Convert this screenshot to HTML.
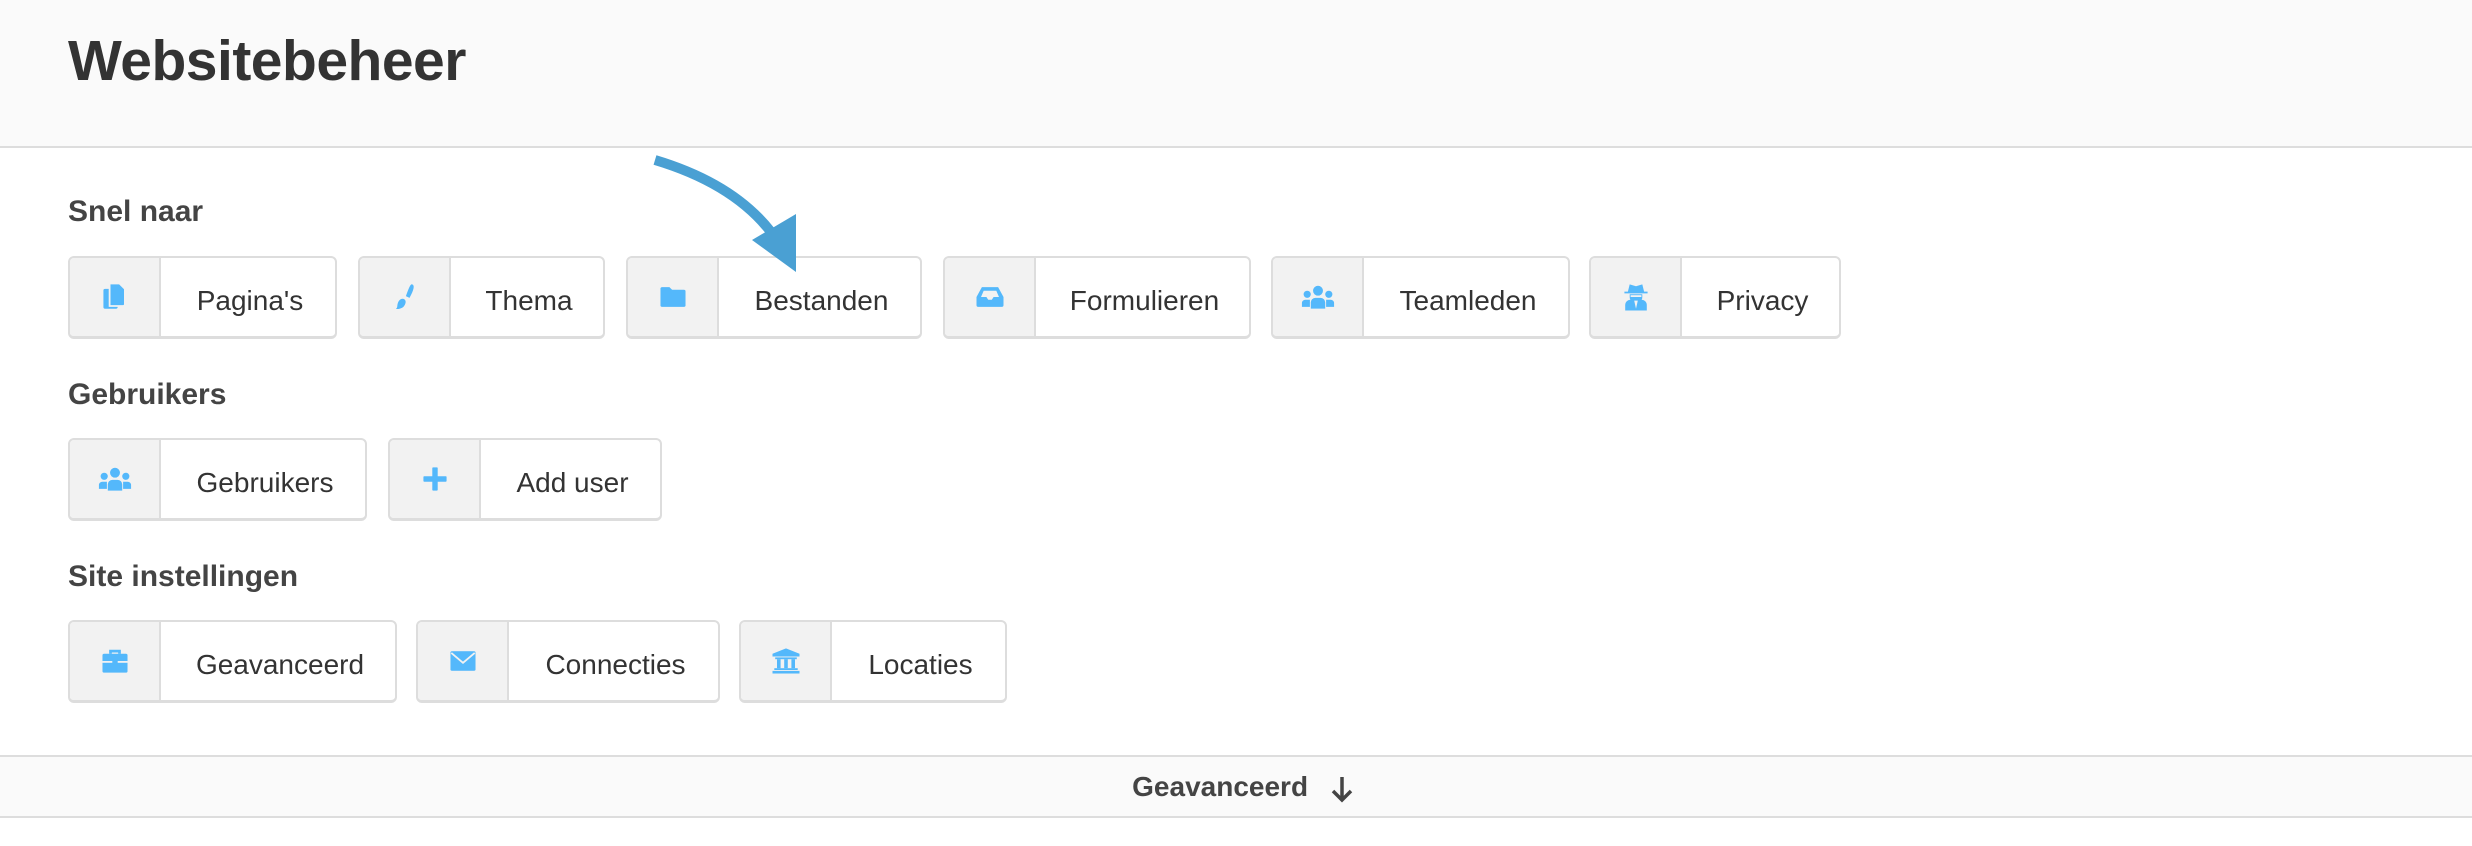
<!DOCTYPE html>
<html><head><meta charset="utf-8"><style>
*{margin:0;padding:0;box-sizing:border-box}
body{width:2472px;height:846px;background:#fff;font-family:"Liberation Sans",Arial,sans-serif;position:relative;overflow:hidden;color:#333}
.hdr{position:absolute;left:0;top:0;width:2472px;height:148px;background:#fafafa;border-bottom:2px solid #ddd}
h1{position:absolute;left:68px;top:28px;font-size:57px;font-weight:bold;color:#333;letter-spacing:-0.5px}
h2{position:absolute;left:68px;font-size:30px;font-weight:bold;color:#444}
.btn{position:absolute;height:83px;border:2px solid #ddd;border-bottom-width:3px;border-radius:6px;background:#fff;display:flex;overflow:hidden}
.ic{width:91px;background:#f2f2f2;border-right:2px solid #ddd;display:flex;align-items:center;justify-content:center;flex:none}
.ic svg{transform:scale(0.9)}
.lb{flex:1;display:flex;align-items:center;justify-content:center;font-size:28px;color:#333;padding-top:7px;padding-left:4px}
.bar{position:absolute;left:0;top:755px;width:2472px;height:63px;background:#fafafa;border-top:2px solid #ddd;border-bottom:2px solid #ddd;text-align:center;font-weight:bold;font-size:28px;color:#444;line-height:59px;padding-left:14px}
svg{display:block}
</style></head><body>
<div class="hdr"><h1>Websitebeheer</h1></div>
<h2 style="top:195px">Snel naar</h2>
<h2 style="top:378px">Gebruikers</h2>
<h2 style="top:560px">Site instellingen</h2>

<div class="btn" style="left:68px;top:256px;width:269px"><div class="ic"><svg width="26" height="30" viewBox="0 0 26 30"><rect x="0" y="6" width="16" height="22" rx="2" fill="#54b8fb"/><path d="M7 0h11l6 6v17a2 2 0 0 1-2 2H7z" fill="#54b8fb" stroke="#f2f2f2" stroke-width="2"/></svg></div><div class="lb">Pagina's</div></div>
<div class="btn" style="left:358px;top:256px;width:247px"><div class="ic"><svg width="24" height="30" viewBox="0 0 24 30"><path d="M20 1c3 1 2 6 -3 15l-4-2C16 6 18 0 20 1z" fill="#54b8fb"/><path d="M9 17c4 0 5 4 2 8c-2 3-8 4-9 3c2-1 1-3 2-6c1-3 3-5 5-5z" fill="#54b8fb"/></svg></div><div class="lb">Thema</div></div>
<div class="btn" style="left:626px;top:256px;width:296px"><div class="ic"><svg width="28" height="24" viewBox="0 0 28 24"><path d="M0 3a2 2 0 0 1 2-2h8l3 3h13a2 2 0 0 1 2 2v15a2 2 0 0 1-2 2H2a2 2 0 0 1-2-2z" fill="#54b8fb"/></svg></div><div class="lb">Bestanden</div></div>
<div class="btn" style="left:943px;top:256px;width:308px"><div class="ic"><svg width="30" height="24" viewBox="0 0 30 24"><path d="M6 1h18l6 11v9a2 2 0 0 1-2 2H2a2 2 0 0 1-2-2v-9z" fill="#54b8fb"/><path d="M8 5h14l3 7h-6l-2 3h-4l-2-3H5z" fill="#f2f2f2"/></svg></div><div class="lb">Formulieren</div></div>
<div class="btn" style="left:1271px;top:256px;width:299px"><div class="ic"><svg width="36" height="26" viewBox="0 0 36 26"><circle cx="18" cy="6" r="5.5" fill="#54b8fb"/><circle cx="6" cy="10" r="4" fill="#54b8fb"/><circle cx="30" cy="10" r="4" fill="#54b8fb"/><path d="M10 26v-7a5 5 0 0 1 5-5h6a5 5 0 0 1 5 5v7z" fill="#54b8fb"/><path d="M0 24v-4a4 4 0 0 1 4-4h5v8zM36 24v-4a4 4 0 0 0-4-4h-5v8z" fill="#54b8fb"/></svg></div><div class="lb">Teamleden</div></div>
<div class="btn" style="left:1589px;top:256px;width:252px"><div class="ic"><svg width="26" height="30" viewBox="0 0 26 30"><path d="M6 1l7 2l7-2l2 8h4v2H0V9h4z" fill="#54b8fb"/><path d="M6 12h14v3a7 7 0 0 1-14 0z" fill="#54b8fb"/><path d="M1 30v-6a6 6 0 0 1 6-6h12a6 6 0 0 1 6 6v6z" fill="#54b8fb"/><path d="M11 19l2 9l2-9z" fill="#f2f2f2"/><rect x="7" y="13" width="12" height="2" fill="#f2f2f2"/></svg></div><div class="lb">Privacy</div></div>

<div class="btn" style="left:68px;top:438px;width:299px"><div class="ic"><svg width="36" height="26" viewBox="0 0 36 26"><circle cx="18" cy="6" r="5.5" fill="#54b8fb"/><circle cx="6" cy="10" r="4" fill="#54b8fb"/><circle cx="30" cy="10" r="4" fill="#54b8fb"/><path d="M10 26v-7a5 5 0 0 1 5-5h6a5 5 0 0 1 5 5v7z" fill="#54b8fb"/><path d="M0 24v-4a4 4 0 0 1 4-4h5v8zM36 24v-4a4 4 0 0 0-4-4h-5v8z" fill="#54b8fb"/></svg></div><div class="lb">Gebruikers</div></div>
<div class="btn" style="left:388px;top:438px;width:274px"><div class="ic"><svg width="26" height="26" viewBox="0 0 26 26"><rect x="10" y="0" width="6" height="26" rx="1" fill="#54b8fb"/><rect x="0" y="10" width="26" height="6" rx="1" fill="#54b8fb"/></svg></div><div class="lb">Add user</div></div>

<div class="btn" style="left:68px;top:620px;width:329px"><div class="ic"><svg width="28" height="26" viewBox="0 0 28 26"><path d="M9 5V2h10v3" fill="none" stroke="#54b8fb" stroke-width="3"/><rect x="0" y="5" width="28" height="21" rx="2" fill="#54b8fb"/><rect x="0" y="13" width="28" height="2" fill="#f2f2f2"/><rect x="11" y="11" width="6" height="6" fill="#54b8fb"/></svg></div><div class="lb">Geavanceerd</div></div>
<div class="btn" style="left:416px;top:620px;width:304px"><div class="ic"><svg width="28" height="22" viewBox="0 0 28 22"><rect x="0" y="0" width="28" height="22" rx="2" fill="#54b8fb"/><path d="M1 2l13 11l13-11" fill="none" stroke="#f2f2f2" stroke-width="2"/></svg></div><div class="lb">Connecties</div></div>
<div class="btn" style="left:739px;top:620px;width:268px"><div class="ic"><svg width="30" height="28" viewBox="0 0 30 28"><path d="M15 0l15 6v3H0V6z" fill="#54b8fb"/><rect x="3" y="10" width="24" height="2" fill="#54b8fb"/><rect x="5" y="12" width="4" height="10" fill="#54b8fb"/><rect x="13" y="12" width="4" height="10" fill="#54b8fb"/><rect x="21" y="12" width="4" height="10" fill="#54b8fb"/><rect x="2" y="22" width="26" height="2" fill="#54b8fb"/><rect x="0" y="25" width="30" height="3" fill="#54b8fb"/></svg></div><div class="lb">Locaties</div></div>

<svg style="position:absolute;left:0;top:0" width="2472" height="846"><path d="M655 160 C705 175 752 200 780 245" fill="none" stroke="#4aa0d3" stroke-width="10"/><path d="M752 240 L796 214 L796 272 Z" fill="#4aa0d3"/></svg>

<div class="bar">Geavanceerd <span style="display:inline-block;margin-left:14px;vertical-align:middle"><svg width="24" height="28" viewBox="0 0 24 28"><path d="M12 2v23M3 16l9 9l9-9" fill="none" stroke="#444" stroke-width="3.5"/></svg></span></div>
</body></html>
